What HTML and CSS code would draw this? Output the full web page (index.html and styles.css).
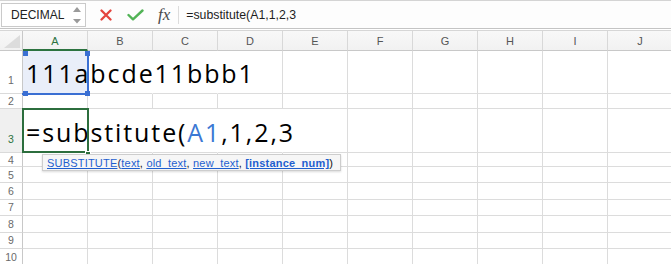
FILE: index.html
```html
<!DOCTYPE html>
<html>
<head>
<meta charset="utf-8">
<link rel="stylesheet" href="styles.css">
</head>
<body>
<div class="toolbar">
  <div class="namebox">
    <span class="nb-text">DECIMAL</span>
    <svg class="spin" width="8" height="18" viewBox="0 0 8 18"><polygon points="0,6 4,1 8,6" fill="#9a9a9a"/><polygon points="0,13 8,13 4,17.5" fill="#9a9a9a"/></svg>
  </div>
  <svg class="ic-x" width="12" height="12" viewBox="0 0 12 12"><path d="M1.5 1.5 L10.5 10.5 M10.5 1.5 L1.5 10.5" stroke="#e4443e" stroke-width="2.3" stroke-linecap="round"/></svg>
  <svg class="ic-check" width="17" height="12" viewBox="0 0 17 12"><path d="M1.5 6 L6 10.3 L15.5 1.5" stroke="#52b356" stroke-width="2.4" fill="none" stroke-linecap="round" stroke-linejoin="round"/></svg>
  <span class="fx">fx</span>
  <span class="sep"></span>
  <span class="formula">=substitute(A1,1,2,3</span>
</div>

<div class="sheet">
  <div class="row hdr">
    <div class="rh corner"><svg width="16" height="13" viewBox="0 0 16 13"><polygon points="16,0 16,13 0,13" fill="#dcdcdc"/></svg></div>
    <div class="c sel">A</div><div class="c">B</div><div class="c">C</div><div class="c">D</div><div class="c">E</div>
    <div class="c">F</div><div class="c">G</div><div class="c">H</div><div class="c">I</div><div class="c">J</div>
  </div>

  <div class="row r1 tall">
    <div class="rh">1</div>
    <div class="c a1">
      <span class="big">111abcde11bbb1</span>
      <i class="ref"></i><i class="hd tl"></i><i class="hd tr"></i><i class="hd bl"></i><i class="hd br"></i>
    </div>
    <div class="c spill"></div><div class="c spill"></div><div class="c"></div><div class="c"></div>
    <div class="c"></div><div class="c"></div><div class="c"></div><div class="c"></div><div class="c"></div>
  </div>

  <div class="row r2">
    <div class="rh">2</div>
    <div class="c"></div><div class="c"></div><div class="c"></div><div class="c"></div><div class="c"></div>
    <div class="c"></div><div class="c"></div><div class="c"></div><div class="c"></div><div class="c"></div>
  </div>

  <div class="row r3 tall">
    <div class="rh cur">3</div>
    <div class="c a3">
      <span class="big">=substitute(<span class="refc">A1</span>,1,2,3</span>
      <i class="act"></i><i class="fill"></i>
    </div>
    <div class="c spill"></div><div class="c spill"></div><div class="c spill"></div><div class="c"></div>
    <div class="c"></div><div class="c"></div><div class="c"></div><div class="c"></div><div class="c"></div>
  </div>

  <div class="row r4">
    <div class="rh">4</div>
    <div class="c"></div><div class="c"></div><div class="c"></div><div class="c"></div><div class="c"></div>
    <div class="c"></div><div class="c"></div><div class="c"></div><div class="c"></div><div class="c"></div>
  </div>
  <div class="row rn">
    <div class="rh">5</div>
    <div class="c"></div><div class="c"></div><div class="c"></div><div class="c"></div><div class="c"></div>
    <div class="c"></div><div class="c"></div><div class="c"></div><div class="c"></div><div class="c"></div>
  </div>
  <div class="row rn">
    <div class="rh">6</div>
    <div class="c"></div><div class="c"></div><div class="c"></div><div class="c"></div><div class="c"></div>
    <div class="c"></div><div class="c"></div><div class="c"></div><div class="c"></div><div class="c"></div>
  </div>
  <div class="row rn">
    <div class="rh">7</div>
    <div class="c"></div><div class="c"></div><div class="c"></div><div class="c"></div><div class="c"></div>
    <div class="c"></div><div class="c"></div><div class="c"></div><div class="c"></div><div class="c"></div>
  </div>
  <div class="row rn">
    <div class="rh">8</div>
    <div class="c"></div><div class="c"></div><div class="c"></div><div class="c"></div><div class="c"></div>
    <div class="c"></div><div class="c"></div><div class="c"></div><div class="c"></div><div class="c"></div>
  </div>
  <div class="row rn">
    <div class="rh">9</div>
    <div class="c"></div><div class="c"></div><div class="c"></div><div class="c"></div><div class="c"></div>
    <div class="c"></div><div class="c"></div><div class="c"></div><div class="c"></div><div class="c"></div>
  </div>
  <div class="row rn">
    <div class="rh">10</div>
    <div class="c"></div><div class="c"></div><div class="c"></div><div class="c"></div><div class="c"></div>
    <div class="c"></div><div class="c"></div><div class="c"></div><div class="c"></div><div class="c"></div>
  </div>
</div>

<div class="tip"><span class="lk">SUBSTITUTE</span><span class="paren">(</span><span class="lk">text</span>, <span class="lk">old_text</span>, <span class="lk">new_text</span>, <span class="lk bold">[instance_num]</span>)</div>
</body>
</html>
```

FILE: styles.css
```css
* { box-sizing: border-box; }
html, body { margin: 0; padding: 0; }
body {
  width: 671px;
  height: 264px;
  overflow: hidden;
  background: #fff;
  font-family: "Liberation Sans", Arial, sans-serif;
  position: relative;
}

/* ---------- formula bar ---------- */
.toolbar {
  display: flex;
  align-items: center;
  height: 29px;
  border-top: 1px solid #d4d4d4;
  border-bottom: 1px solid #c4c4c4;
  background: #fdfdfd;
}
.namebox {
  margin-left: 1px;
  width: 85px;
  height: 24px;
  border: 1px solid #cacaca;
  background: #fff;
  display: flex;
  align-items: center;
  padding-left: 9px;
  font-size: 12px;
  color: #222;
}
.nb-text { flex: 1; }
.spin { margin-right: 4px; display: block; }
.ic-x { margin-left: 14px; display: block; }
.ic-check { margin-left: 15px; display: block; }
.fx {
  margin-left: 14px;
  font-family: "Liberation Serif", "Times New Roman", serif;
  font-style: italic;
  font-size: 17px;
  color: #4a4a4a;
  line-height: 1;
}
.sep {
  margin-left: 8px;
  width: 1px;
  height: 18px;
  background: #dcdcdc;
}
.formula {
  margin-left: 7px;
  font-size: 12.3px;
  color: #1e1e1e;
}

/* ---------- grid ---------- */
.sheet { display: flex; flex-direction: column; }
.row { display: flex; flex: none; }
.rh {
  width: 23px;
  flex: none;
  border-right: 1px solid #c8c8c8;
  border-bottom: 1px solid #dadada;
  display: flex;
  justify-content: center;
  align-items: center;
  font-size: 10.5px;
  color: #6a6a6a;
}
.c {
  width: 65px;
  flex: none;
  border-right: 1px solid #dcdcdc;
  border-bottom: 1px solid #dcdcdc;
  position: relative;
}
.c.spill { border-right-color: transparent; }

.hdr {
  margin-top: 1px;
  height: 21px;
  border-top: 1px solid #d6d6d6;
  background: linear-gradient(#f8f8f8, #f1f1f1);
}
.hdr .rh { border-bottom: 1px solid #c8c8c8; align-items: flex-end; justify-content: flex-end; padding: 0 2px 2px 0; }
.corner svg { display: block; }
.hdr .c {
  border-bottom: 1px solid #c8c8c8;
  border-right-color: #d8d8d8;
  display: flex;
  align-items: center;
  justify-content: center;
  font-size: 11px;
  color: #555;
}
.hdr .c.sel { border-bottom: 2px solid #2c7340; color: #2c7340; padding-top: 1px; }

.r1 { height: 43px; }
.r2 { height: 15px; }
.r3 { height: 44px; }
.r4 { height: 14px; }
.rn { height: 16.4px; }
.tall .rh { align-items: flex-end; padding-bottom: 7px; }
.rh.cur { background: #f0f0f0; color: #2c7340; }

.a1, .a3 {
  display: flex;
  align-items: flex-end;
  padding: 0 0 7px 3px;
}
.a1 { background: #e9eef9; }
.big {
  font-family: "Open Sans", "Liberation Sans", sans-serif;
  font-size: 25px;
  line-height: 25px;
  letter-spacing: 1.9px;
  white-space: nowrap;
  color: #000;
  position: relative;
  z-index: 2;
}
.refc { color: #3b78d4; }

/* reference highlight on A1 */
.ref {
  position: absolute;
  left: -1px; top: 0; right: -2px; bottom: -2px;
  border-right: 2px solid #3a6fd3;
  border-bottom: 2px solid #3a6fd3;
  z-index: 3;
}
.hd {
  position: absolute;
  width: 5px; height: 5px;
  background: #3a6fd3;
  z-index: 4;
}
.hd.tl { left: 0; top: 0; }
.hd.tr { right: -3px; top: 0; }
.hd.bl { left: 0; bottom: -3px; }
.hd.br { right: -3px; bottom: -3px; }

/* active cell A3 */
.act {
  position: absolute;
  left: -1px; top: -1px; right: -2px; bottom: -1px;
  border: 2px solid #2c6e3d;
  z-index: 3;
}
.fill {
  position: absolute;
  right: -4px; bottom: -4px;
  width: 6px; height: 5px;
  background: #2c6e3d;
  border: 1px solid #fff;
  z-index: 4;
}

/* ---------- function tooltip ---------- */
.tip {
  position: absolute;
  left: 42px;
  top: 154px;
  width: 299px;
  height: 17px;
  padding: 2px 0 0 4px;
  background: #f6f6f6;
  border: 1px solid #cdcdcd;
  box-shadow: 0 1px 2px rgba(0,0,0,0.15);
  font-size: 11px;
  line-height: 13px;
  letter-spacing: 0.2px;
  color: #111;
  white-space: nowrap;
  z-index: 10;
}
.lk { color: #1f5fcf; text-decoration: underline; }
.bold { font-weight: bold; }
.paren { color: #1a2a55; }
```
